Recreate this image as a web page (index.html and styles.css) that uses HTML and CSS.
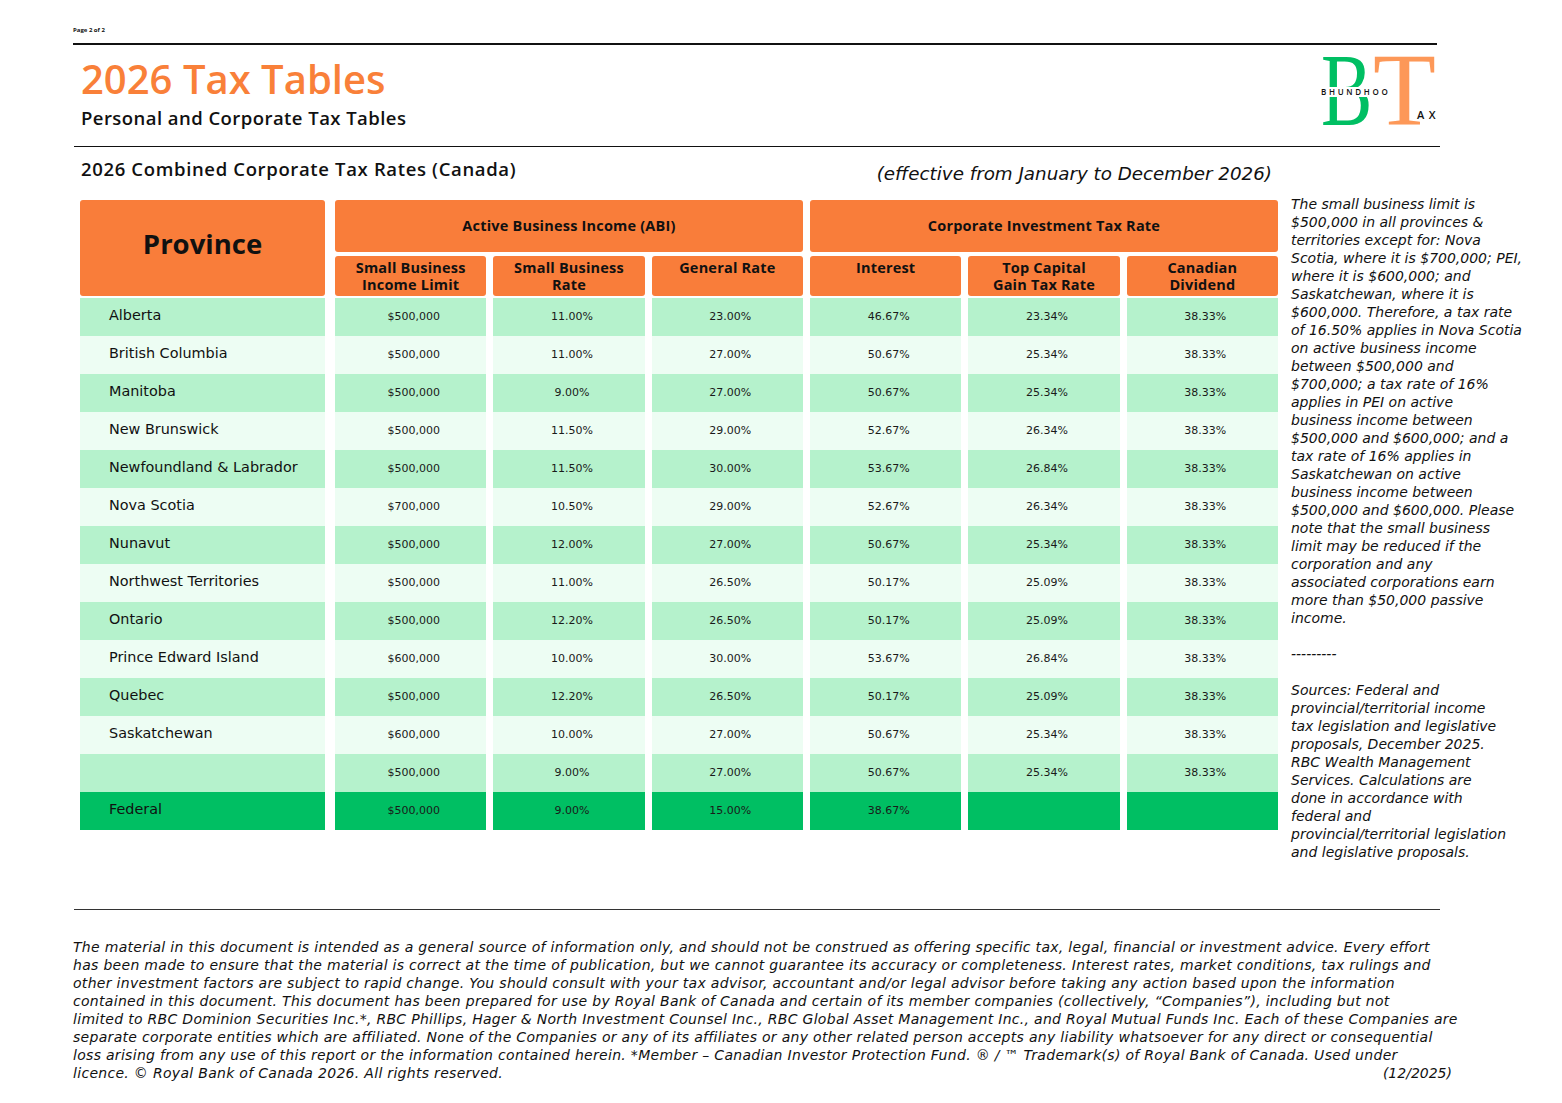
FILE: index.html
```html
<!DOCTYPE html>
<html lang="en">
<head>
<meta charset="utf-8">
<title>2026 Tax Tables</title>
<link rel="stylesheet" href="styles.css">
</head>
<body>
<div class="page">
  <div class="pageno">Page 2 of 2</div>
  <div class="rule rule-top"></div>

  <header class="masthead">
    <div class="titles">
      <h1 class="title">2026 Tax Tables</h1>
      <p class="subtitle">Personal and Corporate Tax Tables</p>
    </div>
    <div class="logo" aria-label="Bhundhoo Tax">
      <span class="logo-b">B</span>
      <span class="logo-t">T</span>
      <span class="logo-name">BHUNDHOO</span>
      <span class="logo-ax">AX</span>
    </div>
  </header>

  <div class="rule rule-mid"></div>

  <section class="rates">
    <div class="rates-main">
      <div class="rates-head">
        <h2 class="rates-title">2026 Combined Corporate Tax Rates (Canada)</h2>
        <p class="effective">(effective from January to December 2026)</p>
      </div>

      <div class="thead">
        <div class="th th-province">Province</div>
        <div class="th th-group th-abi">Active Business Income (ABI)</div>
        <div class="th th-group th-cit">Corporate Investment Tax Rate</div>
        <div class="th th-sub">Small Business<br>Income Limit</div>
        <div class="th th-sub">Small Business<br>Rate</div>
        <div class="th th-sub">General Rate</div>
        <div class="th th-sub">Interest</div>
        <div class="th th-sub">Top Capital<br>Gain Tax Rate</div>
        <div class="th th-sub">Canadian<br>Dividend</div>
      </div>

      <div class="tbody">
        <div class="tr dark"><div class="td name">Alberta</div><div class="td">$500,000</div><div class="td">11.00%</div><div class="td">23.00%</div><div class="td">46.67%</div><div class="td">23.34%</div><div class="td">38.33%</div></div>
        <div class="tr light"><div class="td name">British Columbia</div><div class="td">$500,000</div><div class="td">11.00%</div><div class="td">27.00%</div><div class="td">50.67%</div><div class="td">25.34%</div><div class="td">38.33%</div></div>
        <div class="tr dark"><div class="td name">Manitoba</div><div class="td">$500,000</div><div class="td">9.00%</div><div class="td">27.00%</div><div class="td">50.67%</div><div class="td">25.34%</div><div class="td">38.33%</div></div>
        <div class="tr light"><div class="td name">New Brunswick</div><div class="td">$500,000</div><div class="td">11.50%</div><div class="td">29.00%</div><div class="td">52.67%</div><div class="td">26.34%</div><div class="td">38.33%</div></div>
        <div class="tr dark"><div class="td name">Newfoundland &amp; Labrador</div><div class="td">$500,000</div><div class="td">11.50%</div><div class="td">30.00%</div><div class="td">53.67%</div><div class="td">26.84%</div><div class="td">38.33%</div></div>
        <div class="tr light"><div class="td name">Nova Scotia</div><div class="td">$700,000</div><div class="td">10.50%</div><div class="td">29.00%</div><div class="td">52.67%</div><div class="td">26.34%</div><div class="td">38.33%</div></div>
        <div class="tr dark"><div class="td name">Nunavut</div><div class="td">$500,000</div><div class="td">12.00%</div><div class="td">27.00%</div><div class="td">50.67%</div><div class="td">25.34%</div><div class="td">38.33%</div></div>
        <div class="tr light"><div class="td name">Northwest Territories</div><div class="td">$500,000</div><div class="td">11.00%</div><div class="td">26.50%</div><div class="td">50.17%</div><div class="td">25.09%</div><div class="td">38.33%</div></div>
        <div class="tr dark"><div class="td name">Ontario</div><div class="td">$500,000</div><div class="td">12.20%</div><div class="td">26.50%</div><div class="td">50.17%</div><div class="td">25.09%</div><div class="td">38.33%</div></div>
        <div class="tr light"><div class="td name">Prince Edward Island</div><div class="td">$600,000</div><div class="td">10.00%</div><div class="td">30.00%</div><div class="td">53.67%</div><div class="td">26.84%</div><div class="td">38.33%</div></div>
        <div class="tr dark"><div class="td name">Quebec</div><div class="td">$500,000</div><div class="td">12.20%</div><div class="td">26.50%</div><div class="td">50.17%</div><div class="td">25.09%</div><div class="td">38.33%</div></div>
        <div class="tr light"><div class="td name">Saskatchewan</div><div class="td">$600,000</div><div class="td">10.00%</div><div class="td">27.00%</div><div class="td">50.67%</div><div class="td">25.34%</div><div class="td">38.33%</div></div>
        <div class="tr dark"><div class="td name"></div><div class="td">$500,000</div><div class="td">9.00%</div><div class="td">27.00%</div><div class="td">50.67%</div><div class="td">25.34%</div><div class="td">38.33%</div></div>
        <div class="tr federal"><div class="td name">Federal</div><div class="td">$500,000</div><div class="td">9.00%</div><div class="td">15.00%</div><div class="td">38.67%</div><div class="td"></div><div class="td"></div></div>
      </div>
    </div>

    <aside class="note">
      <p>The small business limit is<br>$500,000 in all provinces &amp;<br>territories except for: Nova<br>Scotia, where it is $700,000; PEI,<br>where it is $600,000; and<br>Saskatchewan, where it is<br>$600,000. Therefore, a tax rate<br>of 16.50% applies in Nova Scotia<br>on active business income<br>between $500,000 and<br>$700,000; a tax rate of 16%<br>applies in PEI on active<br>business income between<br>$500,000 and $600,000; and a<br>tax rate of 16% applies in<br>Saskatchewan on active<br>business income between<br>$500,000 and $600,000. Please<br>note that the small business<br>limit may be reduced if the<br>corporation and any<br>associated corporations earn<br>more than $50,000 passive<br>income.</p>
      <p>---------</p>
      <p>Sources: Federal and<br>provincial/territorial income<br>tax legislation and legislative<br>proposals, December 2025.<br>RBC Wealth Management<br>Services. Calculations are<br>done in accordance with<br>federal and<br>provincial/territorial legislation<br>and legislative proposals.</p>
    </aside>
  </section>

  <div class="rule rule-foot"></div>

  <footer class="disclaimer">
    <span class="line">The material in this document is intended as a general source of information only, and should not be construed as offering specific tax, legal, financial or investment advice. Every effort</span>
    <span class="line">has been made to ensure that the material is correct at the time of publication, but we cannot guarantee its accuracy or completeness. Interest rates, market conditions, tax rulings and</span>
    <span class="line">other investment factors are subject to rapid change. You should consult with your tax advisor, accountant and/or legal advisor before taking any action based upon the information</span>
    <span class="line">contained in this document. This document has been prepared for use by Royal Bank of Canada and certain of its member companies (collectively, “Companies”), including but not</span>
    <span class="line">limited to RBC Dominion Securities Inc.*, RBC Phillips, Hager &amp; North Investment Counsel Inc., RBC Global Asset Management Inc., and Royal Mutual Funds Inc. Each of these Companies are</span>
    <span class="line">separate corporate entities which are affiliated. None of the Companies or any of its affiliates or any other related person accepts any liability whatsoever for any direct or consequential</span>
    <span class="line">loss arising from any use of this report or the information contained herein. *Member – Canadian Investor Protection Fund. ® / ™ Trademark(s) of Royal Bank of Canada. Used under</span>
    <span class="line last"><span>licence. © Royal Bank of Canada 2026. All rights reserved.</span><span class="date">(12/2025)</span></span>
  </footer>
</div>
</body>
</html>
```

FILE: styles.css
```css
* { box-sizing: border-box; }

html, body {
  margin: 0;
  padding: 0;
  background: #ffffff;
}

body {
  font-family: "Open Sans", "Noto Sans", "DejaVu Sans", sans-serif;
  color: #111111;
}

.page {
  width: 1562px;
  height: 1103px;
  padding-left: 73px;
  padding-top: 25px;
  overflow: hidden;
}

.pageno {
  font-size: 6px;
  font-weight: 700;
  line-height: 10px;
  height: 10px;
}

.rule {
  height: 1.5px;
  background: #111111;
}

.rule-top {
  margin-top: 8px;
  width: 1364px;
}

.rule-mid {
  width: 1366px;
  margin-left: 1px;
  height: 1.2px;
}

.rule-foot {
  width: 1366px;
  margin-left: 1px;
  height: 1.2px;
  background: #333333;
}

/* ---------- masthead ---------- */
.masthead {
  height: 101px;
  display: flex;
  justify-content: space-between;
  align-items: flex-start;
  width: 1367px;
}

.titles {
  padding-left: 8px;
  padding-top: 10px;
}

.title {
  margin: 0;
  font-size: 40px;
  line-height: 48px;
  font-weight: 600;
  color: #f98039;
}

.subtitle {
  margin: 3px 0 0 0;
  font-size: 18.5px;
  line-height: 24px;
  font-weight: 600;
  letter-spacing: 0.45px;
  color: #111111;
}

.logo {
  position: relative;
  width: 120px;
  height: 90px;
  margin-top: 11px;
  font-family: "Liberation Serif", "DejaVu Serif", serif;
}

.logo-b {
  position: absolute;
  left: 1px;
  top: -18px;
  font-size: 104px;
  line-height: 1;
  color: #00bf63;
  transform: scaleX(0.74);
  transform-origin: left top;
}

.logo-t {
  position: absolute;
  left: 53px;
  top: -18px;
  font-size: 104px;
  line-height: 1;
  color: #fd9858;
  transform: scaleX(0.99);
  transform-origin: left top;
}

.logo-name {
  position: absolute;
  left: 0;
  top: 31px;
  font-family: "Open Sans", "DejaVu Sans", sans-serif;
  font-size: 8px;
  font-weight: 600;
  line-height: 10px;
  letter-spacing: 2.7px;
  color: #111111;
  background: #ffffff;
  padding: 0 1px;
}

.logo-ax {
  position: absolute;
  left: 97px;
  top: 52px;
  font-family: "Open Sans", "DejaVu Sans", sans-serif;
  font-size: 11px;
  font-weight: 600;
  line-height: 14px;
  letter-spacing: 4.5px;
  color: #111111;
}

/* ---------- rates section ---------- */
.rates {
  display: flex;
  align-items: flex-start;
  height: 762px;
  padding-left: 7px;
}

.rates-main {
  width: 1198px;
  flex: none;
}

.rates-head {
  height: 53px;
  display: flex;
  justify-content: space-between;
  align-items: flex-start;
  padding-top: 10px;
  padding-right: 6px;
}

.rates-title {
  margin: 0 0 0 1px;
  font-size: 18.5px;
  line-height: 24px;
  font-weight: 600;
  letter-spacing: 0.65px;
}

.effective {
  margin: 5px 0 0 0;
  font-family: "DejaVu Sans", "Open Sans", sans-serif;
  font-size: 18.3px;
  line-height: 24px;
  font-style: italic;
  font-weight: 400;
  color: #111111;
}

.thead,
.tr {
  display: grid;
  grid-template-columns: 248px repeat(6, 1fr);
  column-gap: 7px;
}

.thead {
  grid-template-rows: 52px 40px;
  row-gap: 4px;
}

.th {
  background: #f97d3a;
  border-radius: 3px;
  color: #111111;
  font-weight: 700;
  text-align: center;
}

.th-province {
  grid-column: 1;
  grid-row: 1 / span 2;
  width: 245px;
  font-size: 27.5px;
  display: flex;
  align-items: center;
  justify-content: center;
  padding-bottom: 9px;
}

.th-group {
  grid-row: 1;
  font-size: 14.5px;
  letter-spacing: 0.2px;
  display: flex;
  align-items: center;
  justify-content: center;
}

.th-abi { grid-column: 2 / span 3; }
.th-cit { grid-column: 5 / span 3; }

.th-sub {
  grid-row: 2;
  font-size: 14.5px;
  letter-spacing: 0.2px;
  line-height: 17px;
  padding-top: 3px;
}

.tbody {
  margin-top: 2px;
}

.tr {
  height: 38px;
}

.td {
  display: flex;
  align-items: center;
  justify-content: center;
  padding-left: 6px;
  font-family: "DejaVu Sans", "Open Sans", sans-serif;
  font-size: 11px;
  color: #1a1a1a;
}

.td.name {
  width: 245px;
  justify-content: flex-start;
  padding-left: 29px;
  font-size: 14.4px;
  color: #111111;
  padding-bottom: 3px;
}

.dark .td { background: #b5f2cc; }
.light .td { background: #edfdf3; }
.federal .td { background: #00bf63; }

/* ---------- side note ---------- */
.note {
  margin-left: 13px;
  margin-top: 48px;
  width: 250px;
  font-family: "DejaVu Sans", "Open Sans", sans-serif;
  font-size: 14px;
  line-height: 18px;
  font-style: italic;
  color: #111111;
  white-space: nowrap;
}

.note p {
  margin: 0 0 18px 0;
}

/* ---------- disclaimer ---------- */
.disclaimer {
  margin-top: 28px;
  width: 1379px;
  font-family: "DejaVu Sans", "Open Sans", sans-serif;
  font-size: 14px;
  letter-spacing: 0.3px;
  line-height: 18px;
  font-style: italic;
  color: #111111;
}

.disclaimer .line {
  display: block;
  white-space: nowrap;
}

.disclaimer .last {
  display: flex;
  justify-content: space-between;
}

.disclaimer .date {
  letter-spacing: 0;
}
```
